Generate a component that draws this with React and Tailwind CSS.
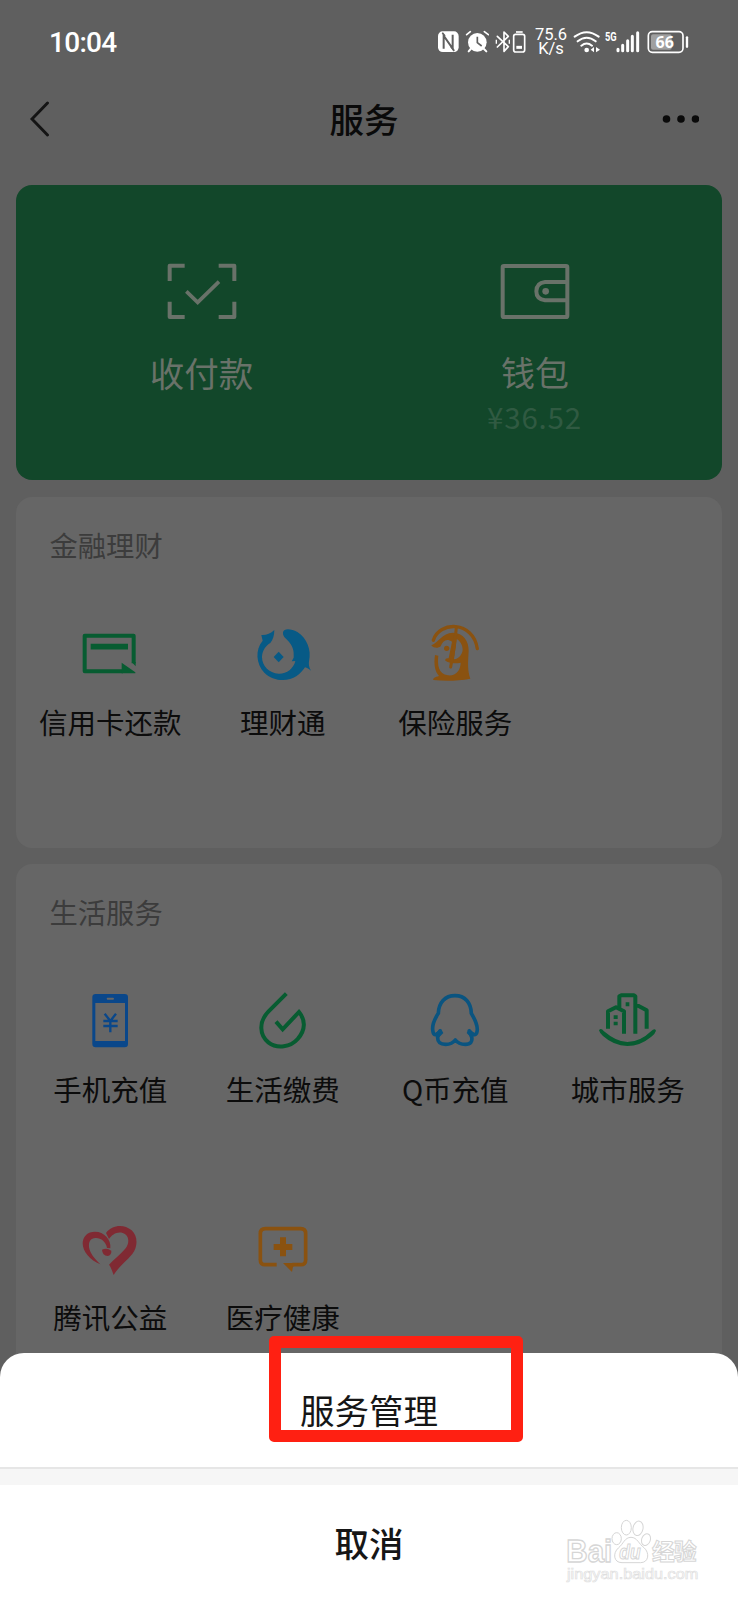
import React from "react";

const GREEN = "#075c31";
const BLUE = "#0a5480";
const ORANGE = "#8a5210";

/* ---------- status bar ---------- */

function StatusBar() {
  return (
    <header className="flex h-[84px] items-center justify-between pl-[49px] pr-[49px] text-white">
      <div className="pt-[1px] font-['Roboto'] text-[28px] font-medium leading-none tracking-[-0.7px]">10:04</div>
      <div className="flex h-[30px] items-center">
        <svg className="h-[24px] w-[22px]" viewBox="108 90 66 72">
          <rect x="111" y="94" width="62" height="62" rx="14" fill="#fff" />
          <path d="M128 146V107L155 146V104" fill="none" stroke="#5f5f5f" strokeWidth="6" />
          <path d="M124 98L132 108M150 140L160 152" stroke="#5f5f5f" strokeWidth="5" />
        </svg>
        <svg className="ml-[6px] h-[24px] w-[24px]" viewBox="192 90 72 72">
          <circle cx="229" cy="127" r="28" fill="#fff" />
          <path d="M197 104L208 95M250 95L262 104" stroke="#fff" strokeWidth="5" strokeLinecap="round" />
          <path d="M209 147L203 154M249 147L256 154" stroke="#fff" strokeWidth="6" strokeLinecap="round" />
          <path d="M229 110V128L242 138" fill="none" stroke="#5f5f5f" strokeWidth="5" />
        </svg>
        <svg className="ml-[6px] h-[24px] w-[32px]" viewBox="282 90 96 72" fill="none" stroke="#fff" strokeWidth="5">
          <path d="M289 109L322 140L309 154V96L322 109L289 141" strokeLinejoin="round" strokeLinecap="round" />
          <path d="M286 119V131M325 119V131" strokeWidth="4" />
          <rect x="338" y="103" width="33" height="53" rx="6" />
          <path d="M345 96H365" />
          <path d="M346 142H363" strokeWidth="9" />
        </svg>
        <div className="ml-[6px] w-[36px] whitespace-pre-line text-center font-['Roboto'] text-[16.500px] leading-[14.500px]">{"75.6\nK/s"}</div>
        <svg className="ml-[4px] h-[24px] w-[28px]" viewBox="519 90 84 72" fill="none" stroke="#fff" strokeWidth="6">
          <path d="M524 110Q560 83 596 110M533 124Q560 102 587 124M544 137Q560 124 576 137" strokeLinecap="round" />
          <circle cx="560" cy="150" r="7" fill="#fff" stroke="none" />
          <path d="M582 141V157L572 149ZM588 141V157L600 149Z" fill="#fff" stroke="none" />
        </svg>
        <svg className="ml-[3px] h-[24px] w-[36px]" viewBox="613 90 108 72">
          <text x="616" y="122" fontFamily="Roboto" fontWeight="700" fontSize="36" textLength="35" lengthAdjust="spacingAndGlyphs" fill="#fff">5G</text>
          <path d="M655 148V152M669 136V152M684 122V152M698 109V152M714 98V152" stroke="#fff" strokeWidth="9" strokeLinecap="round" />
        </svg>
        <svg className="ml-[6px] h-[24px] w-[43px]" viewBox="739 90 129 72">
          <rect x="746" y="95" width="104" height="62" rx="12" fill="none" stroke="#fff" strokeWidth="5" />
          <rect x="754" y="103" width="62" height="46" rx="6" fill="#a0a0a0" />
          <path d="M862 112V140" stroke="#fff" strokeWidth="7" strokeLinecap="round" />
          <text x="795" y="143" textAnchor="middle" fontFamily="Open Sans" fontWeight="700" fontSize="48" fill="#fff">66</text>
        </svg>
      </div>
    </header>
  );
}

/* ---------- icons ---------- */

function Icon({ box, children }) {
  return (
    <svg className="size-16" viewBox={box} fill="none">
      {children}
    </svg>
  );
}

const CardIcon = () => (
  <Icon box="235 425 192 192">
    <path d="M402 549V466H255V573H370" stroke={GREEN} strokeWidth="12" strokeLinejoin="round" />
    <path d="M273 499H385" stroke={GREEN} strokeWidth="17" />
    <path d="M366 547L407 576V579H366Z M396 545L408 558V545Z" fill={GREEN} />
  </Icon>
);

const FundIcon = () => (
  <Icon box="752 425 192 192">
    <path
      fill="#075a86"
      d="M822 449C810 460 798 465 783 464L787 481C764 507 767 551 792 577C817 602 860 607 889 587C900 580 908 569 914 561C920 562 926 566 932 571C925 560 925 551 926 543C934 509 920 473 891 455C873 445 850 443 848 456C846 470 859 475 868 487C879 501 881 514 880 532L874 543L885 542C880 565 858 581 835 580C806 579 785 556 785 531C785 512 796 496 810 488C818 478 822 465 822 449Z"
    />
    <path d="M835 514L850 530L835 546L820 530Z" fill="#075a86" />
  </Icon>
);

const InsuranceIcon = () => (
  <Icon box="-2 11 192 192">
    <path d="M29 66C46 8 148 6 161 91" stroke={ORANGE} strokeWidth="10" strokeLinecap="round" />
    <path
      fillRule="evenodd"
      d="M23 81C45 73 54 44 88 43C119 43 136 68 135 98C133 132 131 155 140 181C103 188 64 189 29 185C27 180 34 176 46 173C33 158 30 137 34 110L44 112C41 140 44 166 73 171C98 173 110 156 111 133C95 137 79 135 65 127C64 121 68 119 75 120L85 70C70 59 57 66 51 84C44 90 31 91 23 81ZM99 62L91 123C106 120 116 108 117 94C117 80 109 68 99 62Z"
      fill={ORANGE}
    />
    <path d="M98 28Q94 86 81 146" stroke={ORANGE} strokeWidth="9" strokeLinecap="round" />
    <circle cx="69" cy="90" r="8" fill={ORANGE} />
  </Icon>
);

const PhoneIcon = () => (
  <Icon box="235 507 192 192">
    <path
      fillRule="evenodd"
      d="M288 522H375Q385 522 385 532V672Q385 682 375 682H288Q278 682 278 672V532Q278 522 288 522ZM287 549V663H376V549ZM323 533Q319 536 323 539H341Q345 536 341 533Z"
      fill="#0a478a"
    />
    <path d="M315 581L332 603L349 581M332 603V637M311 603H354M311 618H354" stroke="#0a478a" strokeWidth="7" />
  </Icon>
);

const UtilityIcon = () => (
  <Icon box="752 507 192 192">
    <path d="M858 521L804 575C774 606 778 646 804 667C831 688 871 681 892 657C917 629 915 599 896 576L847 628L827 605" stroke={GREEN} strokeWidth="12" />
  </Icon>
);

const CoinIcon = () => (
  <Icon box="160 87 192 192">
    <path
      d="M256 107C226 107 207 128 206 160C193 180 186 199 190 215C192 229 204 225 211 213L204 231C203 247 212 253 228 253C243 253 251 248 257 240C263 248 272 253 287 253C303 253 309 244 306 231L299 213C306 225 320 229 322 215C326 199 317 180 305 160C304 128 286 107 256 107Z"
      stroke={BLUE}
      strokeWidth="11"
      strokeLinejoin="round"
    />
    <path d="M194 221L214 206L221 219L207 233ZM317 221L298 206L291 219L305 233Z" fill={BLUE} />
  </Icon>
);

const CityIcon = () => (
  <Icon box="678 87 192 192">
    <path d="M714 206V154L738 142L762 154V221M748 143V109L754 106H792L796 109V221M796 133L830 151V206" stroke={GREEN} strokeWidth="12" strokeLinejoin="round" />
    <path d="M731 166H743V177H731ZM731 185H743V196H731ZM767 127H778V139H767Z" fill={GREEN} />
    <path d="M687 211Q693 202 701 213Q740 246 772 246Q810 246 844 213Q854 203 858 212Q855 222 844 230Q810 258 772 258Q731 257 699 228Q689 220 687 211Z" fill={GREEN} />
  </Icon>
);

const CharityIcon = () => (
  <Icon box="235 53 192 192">
    <path
      d="M302 195C271 184 249 156 249 132C249 111 264 97 286 97C313 97 335 120 332 147L322 146C319 126 302 114 286 116C268 118 265 135 270 151C275 167 288 180 302 195Z"
      fill="#802a33"
    />
    <path d="M319 101C337 77 372 73 396 93C415 111 415 141 398 164C381 185 356 203 342 227C337 214 333 201 328 196C342 181 364 164 378 147C391 130 388 106 369 101C352 96 337 106 328 119Z" fill="#802a33" />
    <path d="M307 151Q322 144 335 154Q336 167 324 170Q308 168 307 151Z" fill="#802a33" />
  </Icon>
);

const MedicalIcon = () => (
  <Icon box="752 53 192 192">
    <path d="M829 196H795Q780 196 780 181V103Q780 88 795 88H901Q916 88 916 103V181Q916 196 901 196H876" stroke={ORANGE} strokeWidth="11" />
    <path d="M848 191H896L878 202L875 218Z" fill={ORANGE} />
    <path d="M848 114V171M820 143H876" stroke={ORANGE} strokeWidth="18" />
  </Icon>
);

/* ---------- page sections ---------- */

function NavBar() {
  return (
    <nav className="flex h-[101px] items-start justify-between pl-[29px] pr-[39px] pt-[17px]">
      <svg className="h-[36px] w-[70px]" viewBox="0 0 70 36" fill="none">
        <path d="M18.500 2L3 18L18.500 34" stroke="#141414" strokeWidth="2.900" strokeLinecap="round" />
      </svg>
      <h1 className="-mt-px text-[34.500px] font-medium leading-[37px] text-[#0a0a0a]">服务</h1>
      <svg className="h-[36px] w-[70px]" viewBox="0 0 70 36" fill="#0a0a0a">
        <circle cx="37.500" cy="18" r="3.800" />
        <circle cx="52" cy="18" r="3.800" />
        <circle cx="66.500" cy="18" r="3.800" />
      </svg>
    </nav>
  );
}

function PayCard() {
  return (
    <section className="grid h-[295px] shrink-0 grid-cols-2 rounded-[16px] bg-[#12472a] pl-[19px] pr-[21px] pt-[75px] text-[#697269]">
      <div className="flex flex-col items-center">
        <svg className="h-16 w-[84px]" viewBox="91 60 252 192" fill="none" stroke="currentColor" strokeWidth="12">
          <path d="M165 77H120V123M267 77H314V123M120 185V231H165M314 185V231H267" strokeLinejoin="round" />
          <path d="M170 154L204 187L268 125" strokeWidth="11" />
        </svg>
        <div className="mt-[23px] text-[34.500px] leading-[50px]">收付款</div>
      </div>
      <div className="flex flex-col items-center">
        <svg className="h-16 w-[84px]" viewBox="101 60 252 192" fill="none" stroke="currentColor" strokeWidth="12">
          <rect x="130" y="78" width="194" height="153" rx="4" />
          <path d="M324 126H257Q231 129 231 154Q231 178 257 181H324" />
          <circle cx="259" cy="154" r="10" fill="currentColor" stroke="none" />
        </svg>
        <div className="mt-[23px] pl-px text-[34px] leading-[50px]">钱包</div>
        <div className="-mt-px text-[29.500px] leading-[40px] tracking-[0.8px] text-[#305a42]">¥36.52</div>
      </div>
    </section>
  );
}

function Service({ icon, label }) {
  return (
    <div className="flex flex-col items-center">
      {icon}
      <div className="mb-px mt-[16px] whitespace-nowrap text-[28.500px] leading-[40px] text-[#0c0c0c]">{label}</div>
    </div>
  );
}

function ServiceCard({ title, className, children }) {
  return (
    <section className={"shrink-0 bg-[#666] " + className}>
      <h2 className="pb-px pl-[33.500px] pt-[28px] text-[28.300px] leading-[40px] text-[#3c3c3c]">{title}</h2>
      <div className="grid grid-cols-4 gap-y-[107px] px-2 pt-[56px]">{children}</div>
    </section>
  );
}

function ActionSheet() {
  return (
    <div className="absolute inset-x-0 bottom-0 flex h-[247px] flex-col overflow-hidden rounded-t-[24px] bg-white text-[34.500px] text-[#161616]">
      <button className="h-[114px] shrink-0">服务管理</button>
      <div className="h-[18px] shrink-0 border-t-2 border-[#e6e6e6] bg-[#f6f6f6]" />
      <button className="h-[115px] shrink-0 font-medium">取消</button>
    </div>
  );
}

function Watermark() {
  return (
    <svg className="absolute bottom-[14px] right-[36px] h-[70px] w-[140px]" viewBox="784 198 420 210" fill="#fff" stroke="#d6d6d6" strokeWidth="3">
      <text x="797" y="336" fontFamily="Liberation Sans" fontWeight="700" fontSize="94" textLength="138" lengthAdjust="spacingAndGlyphs" strokeWidth="4">Bai</text>
      <ellipse cx="948" cy="266" rx="14" ry="18" />
      <ellipse cx="977" cy="233" rx="15" ry="22" />
      <ellipse cx="1012" cy="235" rx="15" ry="22" transform="rotate(12 1012 235)" />
      <ellipse cx="1036" cy="269" rx="13" ry="18" transform="rotate(20 1036 269)" />
      <path d="M991 262C1010 262 1014 282 1030 293C1048 309 1044 338 1020 338H964C938 338 936 309 953 294C968 282 972 262 991 262Z" />
      <text x="956" y="328" fontFamily="Liberation Sans" fontStyle="italic" fontWeight="700" fontSize="58" textLength="64" lengthAdjust="spacingAndGlyphs">du</text>
      <text x="1054" y="329" fontFamily="Noto Sans CJK SC" fontWeight="700" fontSize="68" textLength="134">经验</text>
      <text x="799" y="388" fontFamily="Liberation Sans" fontSize="44" textLength="394" lengthAdjust="spacingAndGlyphs" stroke="#dedede" strokeWidth="2">jingyan.baidu.com</text>
    </svg>
  );
}

export default function App() {
  return (
    <div className="relative h-[1600px] w-[738px] overflow-hidden bg-[#5f5f5f] font-['Noto_Sans_CJK_SC',sans-serif]">
      <StatusBar />
      <NavBar />
      <main className="flex flex-col px-4">
        <PayCard />
        <ServiceCard title="金融理财" className="mt-[17px] h-[351px] rounded-[16px]">
          <Service icon={<CardIcon />} label="信用卡还款" />
          <Service icon={<FundIcon />} label="理财通" />
          <Service icon={<InsuranceIcon />} label="保险服务" />
        </ServiceCard>
        <ServiceCard title="生活服务" className="mt-[16px] h-[740px] rounded-t-[16px]">
          <Service icon={<PhoneIcon />} label="手机充值" />
          <Service icon={<UtilityIcon />} label="生活缴费" />
          <Service icon={<CoinIcon />} label="Q币充值" />
          <Service icon={<CityIcon />} label="城市服务" />
          <Service icon={<CharityIcon />} label="腾讯公益" />
          <Service icon={<MedicalIcon />} label="医疗健康" />
        </ServiceCard>
      </main>
      <ActionSheet />
      <div className="absolute left-[269px] top-[1336px] h-[106px] w-[254px] rounded-[5px] border-[12px] border-[#ff2012]" />
      <Watermark />
    </div>
  );
}
